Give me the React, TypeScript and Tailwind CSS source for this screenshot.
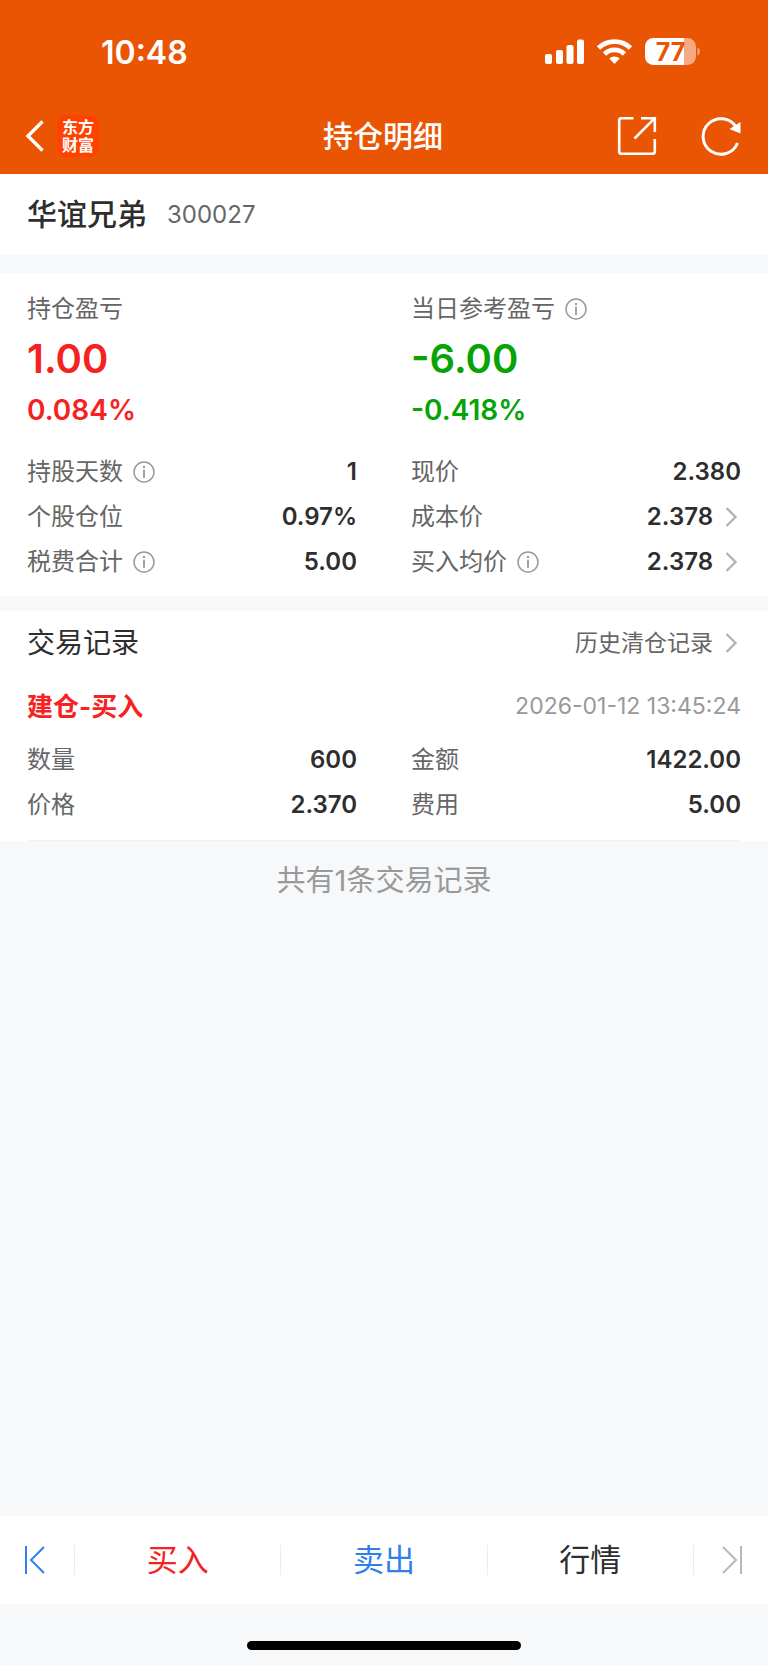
import React from 'react';

type Field = {
  label: string;
  value: string;
  info?: boolean;
  link?: boolean;
};

const positionFields: Field[] = [
  { label: '持股天数', value: '1', info: true },
  { label: '现价', value: '2.380' },
  { label: '个股仓位', value: '0.97%' },
  { label: '成本价', value: '2.378', link: true },
  { label: '税费合计', value: '5.00', info: true },
  { label: '买入均价', value: '2.378', info: true, link: true },
];

const tradeFields: Field[] = [
  { label: '数量', value: '600' },
  { label: '金额', value: '1422.00' },
  { label: '价格', value: '2.370' },
  { label: '费用', value: '5.00' },
];

const tabs = [
  { title: '买入', color: 'text-[#f62222]' },
  { title: '卖出', color: 'text-[#2f80ec]' },
  { title: '行情', color: 'text-[#2e2e2e]' },
];

function InfoButton({ label }: { label: string }) {
  return (
    <button type="button" aria-label={`${label}说明`} className="ml-2.5 shrink-0">
      <svg width="22" height="22" viewBox="0 0 22 22" fill="none" className="block">
        <circle cx="11" cy="11" r="10" stroke="#999" strokeWidth="1.5" />
        <circle cx="11" cy="5.9" r="1.2" fill="#999" />
        <path d="M11 8.8V17" stroke="#999" strokeWidth="1.8" />
      </svg>
    </button>
  );
}

function Chevron() {
  return (
    <svg width="16" height="24" viewBox="0 0 16 24" fill="none" className="ml-3 shrink-0">
      <path d="M1.5 3L10.5 12L1.5 21" stroke="#b3b3b3" strokeWidth="2.4" />
    </svg>
  );
}

function FieldRow({ label, value, info, link }: Field) {
  return (
    <div className="flex h-[45px] items-center">
      <dt className="flex items-center text-2xl text-[#666]">
        {label}
        {info && <InfoButton label={label} />}
      </dt>
      <dd className="ml-auto text-2xl font-semibold text-[#2e2e2e]">
        {link ? (
          <a href="#" className="flex items-center">
            {value}
            <Chevron />
          </a>
        ) : (
          value
        )}
      </dd>
    </div>
  );
}

function FieldGrid({ fields }: { fields: Field[] }) {
  return (
    <dl className="grid grid-cols-2 gap-x-[54px]">
      {fields.map((field) => (
        <FieldRow key={field.label} {...field} />
      ))}
    </dl>
  );
}

function StatusBar() {
  return (
    <div className="flex h-[106px] items-center justify-between pl-[101px] pr-[67px]">
      <span className="text-[32px] font-semibold">10:48</span>
      <svg width="156" height="32" viewBox="0 0 156 32" fill="none">
        <g fill="#fff">
          <rect x="0" y="17" width="7" height="10" rx="2" />
          <rect x="11" y="13" width="7" height="14" rx="2" />
          <rect x="21.5" y="8" width="7" height="19" rx="2" />
          <rect x="32" y="2.5" width="7" height="24.5" rx="2" />
        </g>
        <g stroke="#fff" strokeWidth="4.8">
          <path d="M53.5 11C62 2.4 77 2.4 85.5 11" />
          <path d="M59.5 17C65 11.5 74 11.5 79.5 17" />
        </g>
        <path d="M64.3 21.4C67 18.7 72 18.7 74.7 21.4L69.5 27Z" fill="#fff" />
        <rect x="100" y="1" width="51" height="27" rx="8.5" fill="#fff" fillOpacity="0.5" />
        <path d="M108.5 1H139V28H108.5A8.5 8.5 0 0 1 100 19.5V9.5A8.5 8.5 0 0 1 108.5 1Z" fill="#fff" />
        <path d="M152.5 10.5C155.5 11.5 155.5 17.5 152.5 18.5Z" fill="#fff" fillOpacity="0.5" />
        <text x="125.5" y="24" textAnchor="middle" fontSize="25" fontWeight="700" fill="#ea5504">77</text>
      </svg>
    </div>
  );
}

function NavBar() {
  return (
    <div className="grid h-[68px] grid-cols-3 items-start pr-[27px] pl-[25px]">
      <div className="flex h-15 items-center gap-3">
        <button type="button" aria-label="返回">
          <svg width="20" height="32" viewBox="0 0 20 32" fill="none" className="block">
            <path d="M17.5 1.5L3 16L17.5 30.5" stroke="#fff" strokeWidth="3.4" />
          </svg>
        </button>
        <div className="flex size-[42px] flex-col items-center justify-center rounded-lg bg-[#ff4200] text-base leading-[18px] font-bold">
          <span>东方</span>
          <span>财富</span>
        </div>
      </div>
      <h1 className="text-center text-[30px] leading-[60px] font-medium">持仓明细</h1>
      <div className="flex h-15 items-center justify-end gap-11">
        <button type="button" aria-label="分享">
          <svg width="40" height="40" viewBox="0 0 40 40" fill="none" className="block">
            <path
              d="M16.5 2.2H4.5Q2.2 2.2 2.2 4.5V35.5Q2.2 37.8 4.5 37.8H35.5Q37.8 37.8 37.8 35.5V23M24 2.2H37.8V16M37.8 2.2L17.5 22.5"
              stroke="#fff"
              strokeWidth="2.6"
            />
          </svg>
        </button>
        <button type="button" aria-label="刷新">
          <svg width="40" height="40" viewBox="0 0 40 40" fill="none" className="block">
            <path d="M35 11A17.8 17.8 0 1 0 36.5 27" stroke="#fff" strokeWidth="3" />
            <path d="M39.5 6V17.5L28.5 13Z" fill="#fff" />
          </svg>
        </button>
      </div>
    </div>
  );
}

function BottomBar() {
  return (
    <nav className="flex h-22 items-center bg-white">
      <button type="button" aria-label="第一只" className="flex h-full w-[74px] items-center pl-6">
        <svg width="22" height="28" viewBox="0 0 22 28" fill="none">
          <path d="M2 0V28M20 1L7 14L20 27" stroke="#2f80ec" strokeWidth="2" />
        </svg>
      </button>
      {tabs.map((tab) => (
        <a
          key={tab.title}
          href="#"
          className={`flex-1 border-l border-[#ececec] text-center text-[31px] leading-[30px] ${tab.color}`}
        >
          {tab.title}
        </a>
      ))}
      <span className="h-[30px] border-l border-[#ececec]" />
      <button type="button" aria-label="最后一只" className="flex h-full w-[74px] items-center justify-end pr-[25px]">
        <svg width="22" height="28" viewBox="0 0 22 28" fill="none">
          <path d="M20 0V28M2 1L15 14L2 27" stroke="#b8b8b8" strokeWidth="2" />
        </svg>
      </button>
    </nav>
  );
}

function App() {
  return (
    <div className="flex min-h-screen flex-col bg-[#f7f8fa] font-['Inter','Noto_Sans_CJK_SC',sans-serif]">
      <header className="bg-[#ea5504] text-white">
        <StatusBar />
        <NavBar />
      </header>

      <section className="flex h-[81px] items-center gap-5 bg-white px-[27px]">
        <h2 className="text-[30px] font-medium text-[#2e2e2e]">华谊兄弟</h2>
        <span className="text-2xl text-[#666]">300027</span>
      </section>

      <section className="mt-[18px] bg-white px-[27px] pt-4 pb-3">
        <div className="grid grid-cols-2 gap-x-[54px] pb-[18px]">
          <div>
            <h3 className="text-2xl leading-10 text-[#666]">持仓盈亏</h3>
            <p className="text-[40px] leading-[60px] font-semibold text-[#f62222]">1.00</p>
            <p className="text-[28px] leading-[42px] font-semibold text-[#f62222]">0.084%</p>
          </div>
          <div>
            <h3 className="flex items-center text-2xl leading-10 text-[#666]">
              当日参考盈亏
              <InfoButton label="当日参考盈亏" />
            </h3>
            <p className="text-[40px] leading-[60px] font-semibold text-[#07a307]">-6.00</p>
            <p className="text-[28px] leading-[42px] font-semibold text-[#07a307]">-0.418%</p>
          </div>
        </div>
        <FieldGrid fields={positionFields} />
      </section>

      <section className="mt-[15px] bg-white">
        <div className="flex h-16 items-center justify-between px-[27px]">
          <h2 className="text-[28px] text-[#2e2e2e]">交易记录</h2>
          <a href="#" className="flex items-center text-[23px] text-[#666]">
            历史清仓记录
            <Chevron />
          </a>
        </div>
        <div className="mx-[27px] border-b border-[#f0f1f3] pb-[13px]">
          <div className="flex h-[62px] items-center justify-between">
            <h3 className="text-[26px] font-bold text-[#f62222]">建仓-买入</h3>
            <time className="text-[23px] text-[#999]">2026-01-12 13:45:24</time>
          </div>
          <FieldGrid fields={tradeFields} />
        </div>
      </section>

      <p className="mt-5 text-center text-[29px] leading-10 text-[#999]">共有1条交易记录</p>

      <footer className="mt-auto">
        <BottomBar />
        <div className="flex h-[61px] items-end justify-center pb-[15px]">
          <div className="h-[9px] w-[274px] rounded-full bg-black" />
        </div>
      </footer>
    </div>
  );
}

export default App;
